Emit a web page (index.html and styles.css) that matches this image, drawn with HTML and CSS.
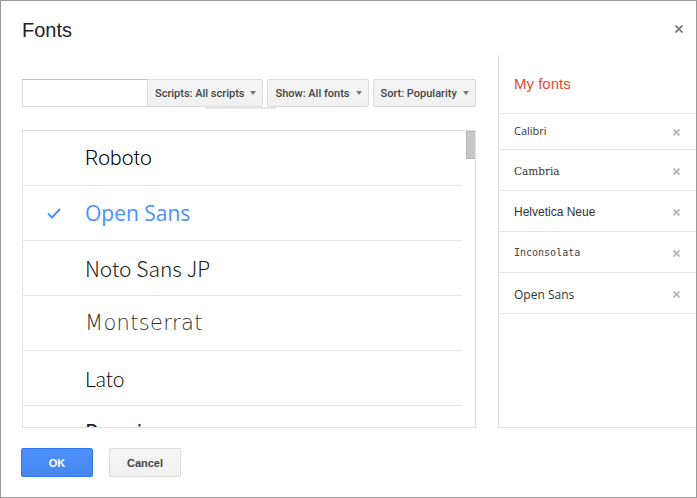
FILE: index.html
```html
<!DOCTYPE html>
<html>
<head>
<meta charset="utf-8">
<link rel="stylesheet" href="styles.css">
</head>
<body>
<div class="dialog">
  <div class="header">
    <div class="title">Fonts</div>
    <svg class="close" width="8" height="8" viewBox="0 0 8 8"><path d="M0.5 0.5L7.5 7.5M7.5 0.5L0.5 7.5" stroke="#777" stroke-width="1.8" fill="none"/></svg>
  </div>
  <div class="main">
    <div class="left">
      <div class="toolbar">
        <input class="search" type="text">
        <div class="dd dd-scripts">Scripts: All scripts<span class="arrow"></span></div>
        <div class="dd">Show: All fonts<span class="arrow"></span></div>
        <div class="dd">Sort: Popularity<span class="arrow"></span></div>
        <div class="ghost"></div>
      </div>
      <div class="list">
        <div class="rows">
          <div class="row"><span class="check"></span><span class="f-roboto">Roboto</span></div>
          <div class="row selected"><span class="check"><svg width="14" height="11" viewBox="0 0 14 11"><path d="M1 5.5L5 9.5L13 1" stroke="#4d90fe" stroke-width="2" fill="none"/></svg></span><span class="f-open">Open Sans</span></div>
          <div class="row"><span class="check"></span><span class="f-noto">Noto Sans JP</span></div>
          <div class="row"><span class="check"></span><span class="f-mont">Montserrat</span></div>
          <div class="row"><span class="check"></span><span class="f-lato">Lato</span></div>
          <div class="row"><span class="check"></span><span class="f-pop">Poppins</span></div>
        </div>
        <div class="scrollbar"><div class="thumb"></div></div>
      </div>
    </div>
    <div class="right">
      <div class="my-head">My fonts</div>
      <div class="my-row first"><span class="m-calibri">Calibri</span><svg class="rm" width="7" height="7" viewBox="0 0 7 7"><path d="M0.5 0.5L6.5 6.5M6.5 0.5L0.5 6.5" stroke="#b5b5b5" stroke-width="1.6" fill="none"/></svg></div>
      <div class="my-row"><span class="m-cambria">Cambria</span><svg class="rm" width="7" height="7" viewBox="0 0 7 7"><path d="M0.5 0.5L6.5 6.5M6.5 0.5L0.5 6.5" stroke="#b5b5b5" stroke-width="1.6" fill="none"/></svg></div>
      <div class="my-row"><span class="m-helv">Helvetica Neue</span><svg class="rm" width="7" height="7" viewBox="0 0 7 7"><path d="M0.5 0.5L6.5 6.5M6.5 0.5L0.5 6.5" stroke="#b5b5b5" stroke-width="1.6" fill="none"/></svg></div>
      <div class="my-row"><span class="m-incon">Inconsolata</span><svg class="rm" width="7" height="7" viewBox="0 0 7 7"><path d="M0.5 0.5L6.5 6.5M6.5 0.5L0.5 6.5" stroke="#b5b5b5" stroke-width="1.6" fill="none"/></svg></div>
      <div class="my-row"><span class="m-open">Open Sans</span><svg class="rm" width="7" height="7" viewBox="0 0 7 7"><path d="M0.5 0.5L6.5 6.5M6.5 0.5L0.5 6.5" stroke="#b5b5b5" stroke-width="1.6" fill="none"/></svg></div>
    </div>
  </div>
  <div class="footer">
    <div class="btn btn-ok">OK</div>
    <div class="btn btn-cancel">Cancel</div>
  </div>
</div>
</body>
</html>
```

FILE: styles.css
```css
* { box-sizing: border-box; }
html, body { margin: 0; padding: 0; background: #fff; }
body { font-family: "Liberation Sans", Arial, sans-serif; }

.dialog {
  width: 697px;
  height: 498px;
  border: 1px solid #9a9a9a;
  background: #fff;
  display: flex;
  flex-direction: column;
}

.header {
  height: 54px;
  padding: 18px 13px 0 21px;
  display: flex;
  justify-content: space-between;
  align-items: flex-start;
}
.title {
  font-family: "Liberation Sans", Arial, sans-serif;
  font-size: 20px;
  line-height: 23px;
  color: #222;
}
.close { margin-top: 6px; display: block; }

.main {
  display: flex;
  height: 373px;
}
.left {
  width: 475px;
  padding-left: 21px;
  flex: none;
}
.toolbar {
  position: relative;
  margin-top: 24px;
  height: 28px;
  display: flex;
  align-items: stretch;
}
.search {
  width: 126px;
  height: 28px;
  margin: 0;
  border: 1px solid #d9d9d9;
  border-top-color: #c0c0c0;
  padding: 0 6px;
  outline: none;
  font-size: 13px;
  background: #fff;
}
.dd {
  height: 28px;
  display: flex;
  align-items: center;
  padding: 0 6px 0 7px;
  border: 1px solid #dcdcdc;
  border-radius: 2px;
  background: linear-gradient(#f5f5f5, #f1f1f1);
  font-family: Roboto, "Liberation Sans", sans-serif;
  font-weight: 500;
  font-size: 11px;
  color: #444;
  margin-left: 4px;
  white-space: nowrap;
}
.dd-scripts { margin-left: -1px; border-radius: 0 2px 2px 0; }
.arrow {
  width: 0;
  height: 0;
  border-left: 3px solid transparent;
  border-right: 3px solid transparent;
  border-top: 4px solid #777;
  margin-left: 6px;
}
.ghost {
  position: absolute;
  left: 183px;
  top: 28px;
  width: 71px;
  height: 2px;
  background: #e8e8e8;
}

.list {
  margin-top: 23px;
  width: 454px;
  height: 298px;
  border: 1px solid #e0e0e0;
  display: flex;
  overflow: hidden;
}
.rows {
  width: 439px;
  flex: none;
  overflow: hidden;
}
.row {
  height: 55px;
  border-bottom: 1px solid #e5e5e5;
  display: flex;
  align-items: center;
  padding-left: 24px;
  font-size: 21px;
  color: #222;
  white-space: nowrap;
}
.check {
  width: 38px;
  flex: none;
  display: flex;
  align-items: center;
}
.check svg { display: block; margin-top: 1px; }
.f-roboto { font-family: Roboto, sans-serif; font-weight: 300; color: #000; }
.f-open { font-family: "Open Sans", sans-serif; color: #4d90fe; }
.f-noto { font-family: "Noto Sans CJK JP", "Noto Sans", sans-serif; font-weight: 300; color: #1a1a1a; }
.f-mont { font-family: "DejaVu Sans", sans-serif; font-weight: 200; letter-spacing: 0.3px; color: #333; }
.f-lato { font-family: Lato, sans-serif; font-weight: 300; color: #000; }
.f-pop { font-family: "DejaVu Sans", sans-serif; }

.scrollbar {
  flex: 1;
  position: relative;
}
.thumb {
  margin-left: 4px;
  width: 10px;
  height: 28px;
  background: #c8c8c8;
  border: 1px solid #b4b4b4;
}

.right {
  flex: 1;
  margin-left: 22px;
  border-left: 1px solid #e0e0e0;
  border-bottom: 1px solid #e0e0e0;
  height: 373px;
}
.my-head {
  height: 59px;
  border-bottom: 1px solid #e5e5e5;
  display: flex;
  align-items: center;
  padding-left: 15px;
  padding-bottom: 1px;
  font-family: "Liberation Sans", Arial, sans-serif;
  font-size: 15px;
  color: #dd4b39;
}
.my-row {
  height: 41px;
  border-bottom: 1px solid #e5e5e5;
  display: flex;
  align-items: center;
  justify-content: space-between;
  padding: 0 16px 0 15px;
  font-size: 12px;
  color: #333;
}
.my-row span { line-height: 14px; margin-top: 2px; }
.my-row .rm { display: block; margin-top: 2px; }
.my-row.first { height: 36px; }
.my-row.first span { margin-top: 0; margin-bottom: 2px; }
.my-row.first .rm { margin-top: 1px; }
.m-calibri { font-family: "Open Sans", sans-serif; font-size: 11px; }
.m-cambria { font-family: "DejaVu Serif", serif; font-size: 10.5px; }
.m-helv { font-family: "Liberation Sans", Arial, sans-serif; }
.m-incon { font-family: "DejaVu Sans Mono", monospace; font-size: 10px; color: #444; }
.my-row .m-open { font-family: "Open Sans", sans-serif; margin-top: 4px; }

.footer {
  display: flex;
  padding-left: 20px;
  margin-top: 20px;
  gap: 16px;
}
.btn {
  width: 72px;
  height: 29px;
  display: flex;
  align-items: center;
  justify-content: center;
  border-radius: 2px;
  font-family: "Liberation Sans", Arial, sans-serif;
  font-weight: bold;
  font-size: 11px;
}
.btn-ok {
  background: linear-gradient(#4d90fe, #4787ed);
  border: 1px solid #3079ed;
  color: #fff;
}
.btn-cancel {
  background: linear-gradient(#f5f5f5, #f1f1f1);
  border: 1px solid #dcdcdc;
  color: #444;
}
```
